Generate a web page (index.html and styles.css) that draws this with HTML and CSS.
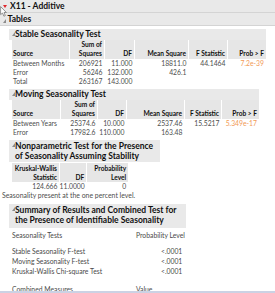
FILE: index.html
```html
<!DOCTYPE html>
<html lang="en">
<head>
    <meta charset="UTF-8">
    <title>X11 - Additive</title>
    <link rel="stylesheet" href="styles.css">
</head>
<body>
<div class="report">
    <div class="outline-head top-head">
        <span class="red-tri"></span>X11 - Additive
    </div>
    <div class="outline-head tables-head">
        <span class="disc small"></span>Tables
    </div>
    <!-- mouse pointer left over the Tables toggle -->
    <svg class="cursor" width="7" height="11" viewBox="0 0 7 11">
        <path d="M0.6 0.6 L0.6 8.6 L2.5 7 L3.9 10.2 L5.3 9.6 L4 6.5 L6.4 6.5 Z" fill="#fff" stroke="#7a7a7a" stroke-width="0.8"/>
    </svg>

    <div class="section">
        <div class="section-head"><span class="disc"></span>Stable Seasonality Test</div>
        <table class="stats">
            <thead>
                <tr>
                    <th class="left w54">Source</th>
                    <th class="w32">Sum of<br>Squares</th>
                    <th class="w27">DF</th>
                    <th class="w51">Mean Square</th>
                    <th class="w36">F Statistic</th>
                    <th class="w36">Prob &gt; F</th>
                </tr>
            </thead>
            <tbody>
                <tr><td class="left">Between Months</td><td>206921</td><td>11.000</td><td>18811.0</td><td>44.1464</td><td class="prob">7.2e-39</td></tr>
                <tr><td class="left">Error</td><td>56246</td><td>132.000</td><td>426.1</td><td></td><td></td></tr>
                <tr><td class="left">Total</td><td>263167</td><td>143.000</td><td></td><td></td><td></td></tr>
            </tbody>
        </table>
    </div>

    <div class="section">
        <div class="section-head"><span class="disc"></span>Moving Seasonality Test</div>
        <table class="stats">
            <thead>
                <tr>
                    <th class="left w45">Source</th>
                    <th class="w34">Sum of<br>Squares</th>
                    <th class="w26">DF</th>
                    <th class="w55">Mean Square</th>
                    <th class="w34">F Statistic</th>
                    <th class="w35">Prob &gt; F</th>
                </tr>
            </thead>
            <tbody>
                <tr><td class="left">Between Years</td><td>25374.6</td><td>10.000</td><td>2537.46</td><td>15.5217</td><td class="prob">5.349e-17</td></tr>
                <tr><td class="left">Error</td><td>17982.6</td><td>110.000</td><td>163.48</td><td></td><td></td></tr>
            </tbody>
        </table>
    </div>

    <div class="section">
        <div class="section-head wrap np-head"><span class="disc"></span>Nonparametric Test for the Presence<br>of Seasonality Assuming Stability</div>
        <table class="stats kw">
            <thead>
                <tr>
                    <th class="w45">Kruskal-Wallis<br>Statistic</th>
                    <th class="w24">DF</th>
                    <th class="w39">Probability<br>Level</th>
                </tr>
            </thead>
            <tbody>
                <tr><td>124.666</td><td>11.0000</td><td>0</td></tr>
            </tbody>
        </table>
        <p class="note">Seasonality present at the one percent level.</p>
    </div>

    <div class="section">
        <div class="section-head wrap sum-head"><span class="disc"></span>Summary of Results and Combined Test for<br>the Presence of Identifiable Seasonality</div>
        <table class="plain">
            <tr><td class="name">Seasonality Tests</td><td>Probability Level</td></tr>
            <tr class="gap"><td></td><td></td></tr>
            <tr><td class="name">Stable Seasonality F-test</td><td class="pv">&lt;.0001</td></tr>
            <tr><td class="name">Moving Seasonality F-test</td><td class="pv">&lt;.0001</td></tr>
            <tr><td class="name">Kruskal-Wallis Chi-square Test</td><td class="pv">&lt;.0001</td></tr>
            <tr class="gap big"><td></td><td></td></tr>
            <tr><td class="name">Combined Measures</td><td>Value</td></tr>
        </table>
    </div>
</div>
<div class="bottom-bar"></div>
</body>
</html>
```

FILE: styles.css
```css
body {
    margin: 0;
    padding: 0;
    background-color: #fff;
    font-family: Lato, "Liberation Sans", sans-serif;
    color: #111;
    width: 275px;
    height: 293px;
    overflow: hidden;
    position: relative;
}
.outline-head {
    background-color: #e9e9e9;
    border-bottom: 1px solid #d4d4d4;
    height: 12px;
    line-height: 12px;
    font-weight: bold;
    font-size: 8.5px;
    display: flex;
    align-items: center;
}
.top-head {
    padding-left: 3px;
}
.tables-head {
    padding-left: 3px;
}
.red-tri {
    width: 0;
    height: 0;
    border-left: 2.5px solid transparent;
    border-right: 2.5px solid transparent;
    border-top: 3.5px solid #e0282c;
    margin-right: 3px;
}
.disc {
    width: 0;
    height: 0;
    border-left: 3px solid transparent;
    border-bottom: 4px solid #8c8c8c;
}
.disc.small {
    margin-right: 1.5px;
    margin-top: 4px;
}
.cursor {
    position: absolute;
    left: 0;
    top: 6px;
}
.section {
    margin-left: 9px;
    margin-top: 3px;
    display: inline-block;
    vertical-align: top;
}
.section:first-of-type {
    margin-top: 1px;
}
.section-head {
    background-color: #e9e9e9;
    font-weight: bold;
    font-size: 8.5px;
    line-height: 9px;
    padding: 1px 2px 1px 6px;
    white-space: nowrap;
    position: relative;
}
.section-head .disc {
    position: absolute;
    left: 2.5px;
    top: 3px;
}
.section-head.wrap {
    line-height: 10px;
    box-sizing: border-box;
}
.np-head {
    width: 151px;
}
.sum-head {
    width: 177px;
    padding-bottom: 3px;
}
.stats {
    border-collapse: collapse;
    table-layout: fixed;
    margin-left: 3px;
    font-size: 6.8px;
}
.stats th {
    background-color: #e6e6e6;
    font-weight: bold;
    font-size: 6.6px;
    text-align: right;
    vertical-align: bottom;
    padding: 0 2px 1px 0;
    line-height: 9px;
    border-left: 1px solid #fff;
    white-space: nowrap;
    overflow: hidden;
}
.stats th:first-child {
    border-left: none;
}
.stats td {
    text-align: right;
    color: #4e4e4e;
    padding: 0 2px 0 0;
    line-height: 9px;
    white-space: nowrap;
}
.stats .left {
    text-align: left;
    padding-left: 1px;
}
.stats .prob {
    color: #f29a55;
}
.w24 { width: 24px; }
.w26 { width: 26px; }
.w27 { width: 27px; }
.w32 { width: 32px; }
.w34 { width: 34px; }
.w35 { width: 35px; }
.w36 { width: 36px; }
.w39 { width: 39px; }
.w45 { width: 45px; }
.w51 { width: 51px; }
.w54 { width: 54px; }
.w55 { width: 55px; }
.kw {
    margin-top: 1px;
}
.kw th {
    line-height: 8.5px;
    padding-top: 1px;
}
.note {
    font-size: 6.9px;
    color: #4e4e4e;
    margin: 0 0 0 -7px;
    white-space: nowrap;
    line-height: 9.5px;
}
.plain {
    border-collapse: collapse;
    font-size: 6.8px;
    color: #4a4a4a;
    margin: 2px 0 0 3px;
}
.plain td {
    padding: 0;
    line-height: 10px;
    white-space: nowrap;
}
.plain .name {
    width: 124px;
}
.plain .pv {
    padding-left: 25px;
}
.plain .gap td {
    height: 6px;
    line-height: 6px;
}
.plain .gap.big td {
    height: 8px;
    line-height: 8px;
}
.bottom-bar {
    position: absolute;
    left: 0;
    bottom: 0;
    width: 100%;
    height: 2px;
    background-color: #cbd2e4;
}
```
